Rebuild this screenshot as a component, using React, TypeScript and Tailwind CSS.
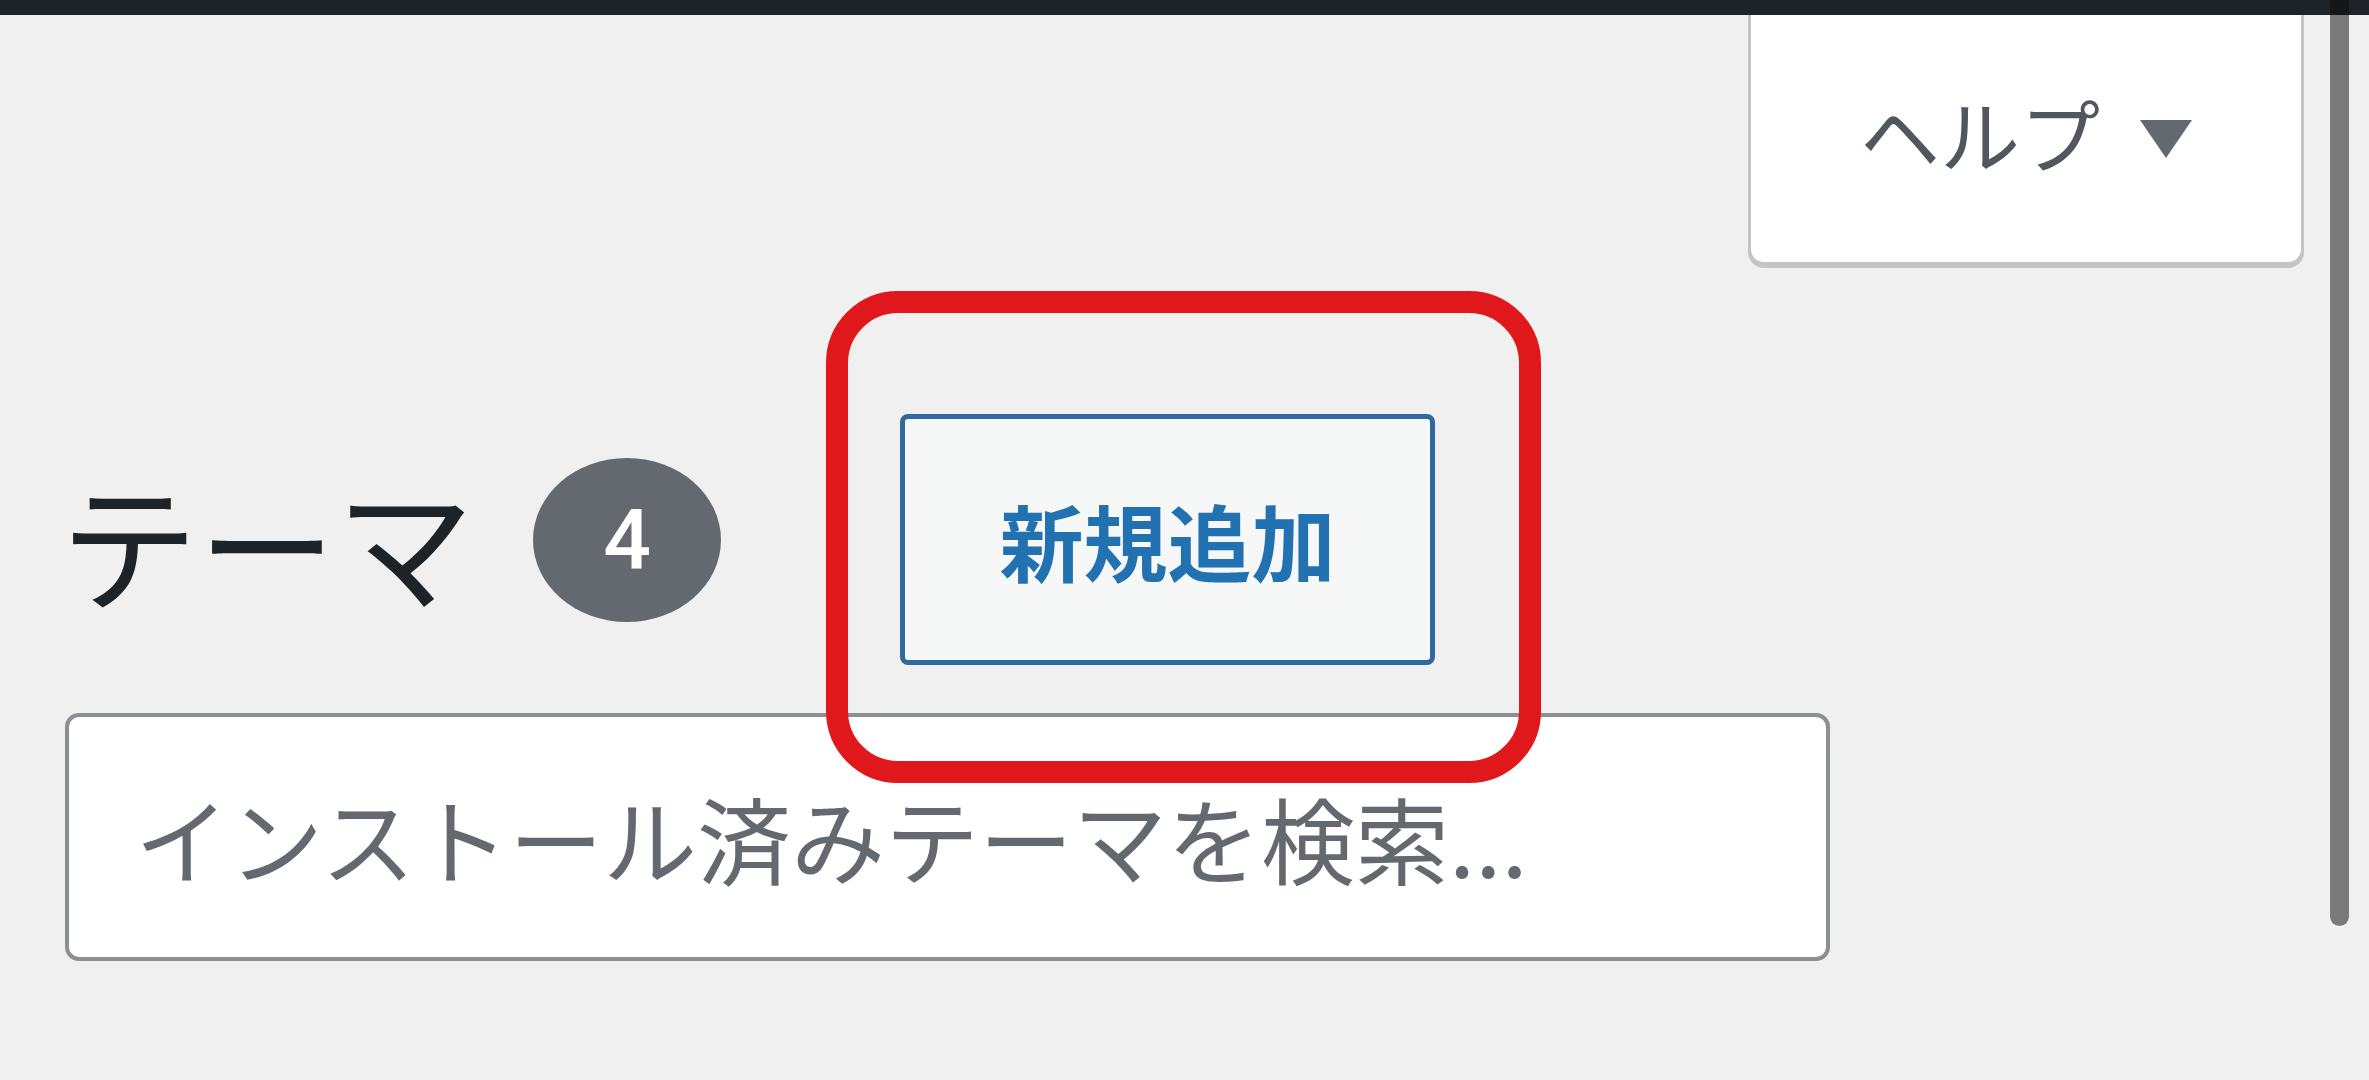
import React from "react";

const jp = { fontFamily: '"Noto Sans CJK JP", "Noto Sans", sans-serif' };

export default function App() {
  return (
    <div
      className="relative w-[2369px] h-[1080px] overflow-hidden bg-[#f0f0f1] flex flex-col"
      style={jp}
    >
      <div className="h-[15px] shrink-0 bg-[#1d2327]" />

      {/* help tab */}
      <div className="flex justify-end pr-[65px]">
        <button className="w-[556px] h-[250px] bg-white border-[3px] border-t-0 border-[#c3c4c7] rounded-b-[16px] shadow-[0_3px_0_#c3c4c7] flex items-center justify-center gap-[40px] text-[#50575e]">
          <span className="text-[80px] leading-none -mt-[14px]">ヘルプ</span>
          <span className="w-0 h-0 border-l-[26px] border-r-[26px] border-t-[38px] border-l-transparent border-r-transparent border-t-[#646970]" />
        </button>
      </div>

      {/* heading */}
      <div className="mt-[149px] pl-[60px] flex items-center">
        <h1 className="text-[138px] leading-none font-normal text-[#1d2327]">テーマ</h1>
        <span
          className="ml-[59px] w-[188px] h-[164px] rounded-[50%] bg-[#646970] text-white flex items-center justify-center text-[84px] font-medium leading-none"
          style={{ fontFamily: 'Roboto, "Liberation Sans", Arial, sans-serif' }}
        >
          4
        </span>
        <button className="ml-[179px] w-[535px] h-[251px] rounded-[8px] border-[5px] border-[#2f6a9c] bg-[#f6f7f7] text-[#2271b1] text-[84px] font-bold leading-none flex items-center justify-center">
          新規追加
        </button>
      </div>

      {/* search */}
      <div className="mt-[48px] pl-[65px]">
        <input
          type="search"
          placeholder="インストール済みテーマを検索..."
          className="w-[1765px] h-[248px] bg-white border-[4px] border-[#8c8f94] rounded-[14px] px-[66px] text-[94px] placeholder:text-[#646970] outline-none"
          style={jp}
        />
      </div>

      {/* annotation */}
      <div className="absolute left-[826px] top-[291px] w-[715px] h-[492px] border-[22px] border-[#e0171b] rounded-[72px] pointer-events-none" />

      {/* scrollbar */}
      <div className="absolute left-[2330px] top-0 w-[19px] h-[926px] rounded-b-full bg-[#7a7a7a]" />
      <div className="absolute left-[2330px] top-0 w-[19px] h-[15px] bg-[#141618]" />
    </div>
  );
}
